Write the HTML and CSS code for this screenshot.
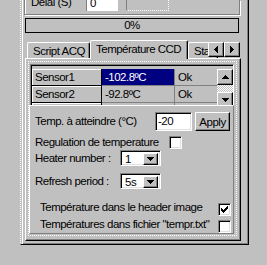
FILE: index.html
```html
<!DOCTYPE html>
<html>
<head>
    <meta charset="UTF-8">
    <title>Température CCD</title>
    <link rel="stylesheet" href="styles.css">
</head>
<body>
<div class="frame">
    <div class="delay">
        <span class="delay-label">Delai (S)</span>
        <span class="delay-input">0</span>
        <span class="delay-box"></span>
    </div>
    <div class="progress">0%</div>

    <div class="tabs">
        <div class="tab tab-first">Script ACQ</div>
        <div class="tab tab-active">Température CCD</div>
        <div class="tab tab-last">Status</div>
        <div class="tab-arrows">
            <span class="btn arrow-btn">
                <svg width="4" height="7"><path d="M3 0h1v7H3z M2 1h1v5H2z M1 2h1v3H1z M0 3h1v1H0z"/></svg>
            </span>
            <span class="btn arrow-btn">
                <svg width="4" height="7"><path d="M0 0h1v7H0z M1 1h1v5H1z M2 2h1v3H2z M3 3h1v1H3z"/></svg>
            </span>
        </div>
    </div>

    <div class="page">
        <div class="focus">
            <div class="grid">
                <div class="grid-cells">
                    <div class="row">
                        <span class="cell fixed">Sensor1</span>
                        <span class="cell value selected">-102.8ºC</span>
                        <span class="cell state">Ok</span>
                    </div>
                    <div class="row">
                        <span class="cell fixed">Sensor2</span>
                        <span class="cell value">-92.8ºC</span>
                        <span class="cell state">Ok</span>
                    </div>
                    <div class="row">
                        <span class="cell fixed">Sensor3</span>
                        <span class="cell value">-</span>
                        <span class="cell state">Ok</span>
                    </div>
                </div>
                <div class="scrollbar">
                    <span class="btn sb-btn">
                        <svg width="7" height="4"><path d="M0 3h7v1H0z M1 2h5v1H1z M2 1h3v1H2z M3 0h1v1H3z"/></svg>
                    </span>
                    <span class="sb-track"></span>
                    <span class="btn sb-btn">
                        <svg width="7" height="4"><path d="M0 0h7v1H0z M1 1h5v1H1z M2 2h3v1H2z M3 3h1v1H3z"/></svg>
                    </span>
                </div>
            </div>

            <div class="panel">
                <div class="field field-temp">
                    <span class="label label-temp">Temp. à atteindre (°C)</span>
                    <span class="input">-20</span>
                    <span class="btn apply">Apply</span>
                </div>
                <div class="field field-reg">
                    <span class="label label-reg">Regulation de temperature</span>
                    <span class="check"></span>
                </div>
                <div class="field field-heater">
                    <span class="label label-combo">Heater number :</span>
                    <span class="combo">
                        <span class="combo-text">1</span>
                        <span class="btn combo-btn">
                            <svg width="7" height="4"><path d="M0 0h7v1H0z M1 1h5v1H1z M2 2h3v1H2z M3 3h1v1H3z"/></svg>
                        </span>
                    </span>
                </div>
                <div class="field field-refresh">
                    <span class="label label-combo">Refresh period :</span>
                    <span class="combo">
                        <span class="combo-text">5s</span>
                        <span class="btn combo-btn">
                            <svg width="7" height="4"><path d="M0 0h7v1H0z M1 1h5v1H1z M2 2h3v1H2z M3 3h1v1H3z"/></svg>
                        </span>
                    </span>
                </div>
                <div class="field field-header">
                    <span class="label label-long">Température dans le header image</span>
                    <span class="check">
                        <svg width="7" height="7"><path d="M6 0h1v1H6z M5 1h2v1H5z M0 2h1v1H0z M4 2h3v1H4z M0 3h2v1H0z M3 3h3v1H3z M0 4h5v1H0z M1 5h3v1H1z M2 6h1v1H2z"/></svg>
                    </span>
                </div>
                <div class="field field-file">
                    <span class="label label-long">Températures dans fichier "tempr.txt"</span>
                    <span class="check"></span>
                </div>
            </div>
        </div>
    </div>
</div>
</body>
</html>
```

FILE: styles.css
```css
body {
    margin: 0;
    width: 267px;
    height: 265px;
    overflow: hidden;
    background: #c0c0c0;
    color: #000;
    font-family: "Liberation Sans", Arial, sans-serif;
    font-size: 11.5px;
    letter-spacing: -0.5px;
}

svg {
    display: block;
    fill: #000;
}

/* raised windows button */
.btn {
    box-sizing: border-box;
    display: flex;
    align-items: center;
    justify-content: center;
    background: #c0c0c0;
    border: 1px solid;
    border-color: #fff #000 #000 #fff;
    box-shadow: inset -1px -1px #808080;
}

.frame {
    margin-left: 20px;
    width: 229px;
    height: 245px;
    box-sizing: border-box;
    border-left: 1px dotted #fff;
    border-right: 1px solid #000;
    border-bottom: 1px solid #000;
    box-shadow: inset 1px 0 #c0c0c0, inset 2px 0 #fff, inset -1px -1px #808080;
    overflow: hidden;
}

/* group box cut by the top of the picture */
.delay {
    display: flex;
    align-items: flex-start;
    margin-left: 3px;
    width: 216px;
    height: 15px;
    box-sizing: border-box;
    border: 1px solid #808080;
    border-top: none;
    box-shadow: 1px 1px #fff, inset 1px 0 #fff;
}

.delay-label {
    margin: -5px 0 0 6px;
    width: 55px;
    line-height: 14px;
}

.delay-input {
    margin-top: -1px;
    width: 32px;
    height: 12px;
    box-sizing: border-box;
    padding-left: 3px;
    background: #fff;
    border-left: 1px solid #808080;
    line-height: 8px;
}

.delay-box {
    margin-left: 8px;
    width: 43px;
    height: 11px;
    box-sizing: border-box;
    border-left: 1px solid #808080;
    border-right: 1px dotted #fff;
    border-bottom: 1px dotted #fff;
}

.progress {
    margin: 3px 0 0 4px;
    width: 214px;
    height: 15px;
    box-sizing: border-box;
    border: 1px solid #000;
    text-align: center;
    line-height: 13px;
}

/* tab strip */
.tabs {
    position: relative;
    display: flex;
    align-items: flex-end;
    margin: 7px 0 0 4px;
    width: 216px;
    height: 19px;
}

.tab {
    box-sizing: border-box;
    height: 16px;
    margin-bottom: 1px;
    padding: 1px 0 0 5px;
    border-top: 1px solid #fff;
    border-left: 1px solid #fff;
    border-right: 1px solid #000;
    border-radius: 2px 2px 0 0;
    box-shadow: inset -1px 0 #808080;
    line-height: 14px;
    white-space: nowrap;
    overflow: hidden;
}

.tab-first {
    margin-left: 2px;
    width: 63px;
}

.tab-active {
    position: relative;
    z-index: 1;
    width: 98px;
    height: 19px;
    margin-bottom: 0;
    background: #c0c0c0;
}

.tab-last {
    width: 30px;
}

.tab-arrows {
    position: absolute;
    top: 2px;
    right: 1px;
    display: flex;
}

.arrow-btn {
    width: 16px;
    height: 15px;
}

/* tab page */
.page {
    margin: -1px 0 0 4px;
    width: 216px;
    height: 183px;
    box-sizing: border-box;
    border-top: 1px solid #fff;
    border-left: 1px solid #fff;
    border-right: 1px solid #000;
    border-bottom: 1px solid #000;
    box-shadow: inset -1px -1px #808080;
}

.focus {
    margin: 2px 0 0 2px;
    width: 209px;
    height: 175px;
    box-sizing: border-box;
    border: 1px dotted #fff;
}

/* string grid */
.grid {
    display: flex;
    margin: 2px 0 0 1px;
    width: 204px;
    height: 41px;
    box-sizing: border-box;
    padding: 1px 0 0 1px;
    border-top: 1px solid #808080;
    border-left: 1px solid #808080;
    border-right: 1px solid #fff;
    box-shadow: inset 1px 1px #000;
    overflow: hidden;
}

.grid-cells {
    padding-top: 3px;
}

.row {
    display: flex;
    height: 17px;
}

.cell {
    box-sizing: border-box;
    height: 17px;
    padding-top: 1px;
    line-height: 15px;
    white-space: nowrap;
    overflow: hidden;
}

.fixed {
    width: 70px;
    padding-left: 3px;
    border-right: 1px solid #000;
    border-bottom: 1px solid #000;
    box-shadow: inset 1px 1px #fff;
}

.value {
    width: 73px;
    padding-left: 3px;
    border-right: 1px solid #808080;
    border-bottom: 1px solid #808080;
}

.selected {
    background: #000080;
    color: #fff;
}

.state {
    width: 42px;
    padding-left: 3px;
    border-bottom: 1px solid #808080;
}

.scrollbar {
    display: flex;
    flex-direction: column;
    margin-top: 3px;
    width: 16px;
}

.sb-btn {
    width: 16px;
    height: 16px;
    flex: none;
}

.sb-track {
    height: 7px;
    flex: none;
    background: repeating-conic-gradient(#fff 0 25%, #c0c0c0 0 50%) 0 0 / 2px 2px;
}

/* options panel over the grid */
.panel {
    width: 205px;
    height: 129px;
    box-sizing: border-box;
    border-top: 1px solid #fff;
    border-left: 1px solid #fff;
    border-right: 1px solid #808080;
    border-bottom: 1px solid #808080;
    overflow: hidden;
}

.field {
    display: flex;
    align-items: center;
    padding-left: 5px;
}

.label {
    flex: none;
    white-space: nowrap;
    overflow: hidden;
}

.field-temp {
    margin-top: 6px;
    height: 19px;
}

.label-temp {
    width: 120px;
    line-height: 19px;
}

.input {
    width: 37px;
    height: 19px;
    box-sizing: border-box;
    padding-left: 2px;
    background: #fff;
    border: 1px solid;
    border-color: #808080 #fff #fff #808080;
    box-shadow: inset 1px 1px #000, inset -1px -1px #dfdfdf;
    line-height: 17px;
}

.apply {
    margin-left: 3px;
    width: 35px;
    height: 19px;
}

.field-reg {
    margin-top: 5px;
    height: 13px;
}

.label-reg {
    width: 134px;
    line-height: 13px;
}

.check {
    flex: none;
    display: flex;
    align-items: center;
    justify-content: center;
    width: 13px;
    height: 13px;
    box-sizing: border-box;
    background: #fff;
    border: 1px solid;
    border-color: #808080 #fff #fff #808080;
    box-shadow: inset 1px 1px #000, inset -1px -1px #dfdfdf;
}

.field-heater {
    margin-top: 1px;
    height: 16px;
}

.field-refresh {
    margin-top: 7px;
    height: 16px;
}

.label-combo {
    width: 85px;
    line-height: 16px;
}

.combo {
    display: flex;
    justify-content: space-between;
    width: 41px;
    height: 16px;
    box-sizing: border-box;
    padding: 2px;
    background: #fff;
    border: 1px solid;
    border-color: #808080 #fff #fff #808080;
    box-shadow: inset 1px 1px #000, inset -1px -1px #dfdfdf;
}

.combo-text {
    padding-left: 2px;
    line-height: 12px;
}

.combo-btn {
    width: 15px;
    height: 12px;
}

.field-header,
.field-file {
    align-items: flex-start;
    padding-left: 10px;
}

.field-header {
    margin-top: 12px;
    height: 14px;
}

.field-header .check {
    margin-top: 2px;
}

.field-file {
    margin-top: 3px;
    height: 15px;
}

.field-file .check {
    margin-top: 2px;
}

.label-long {
    width: 178px;
    line-height: 13px;
}
```
